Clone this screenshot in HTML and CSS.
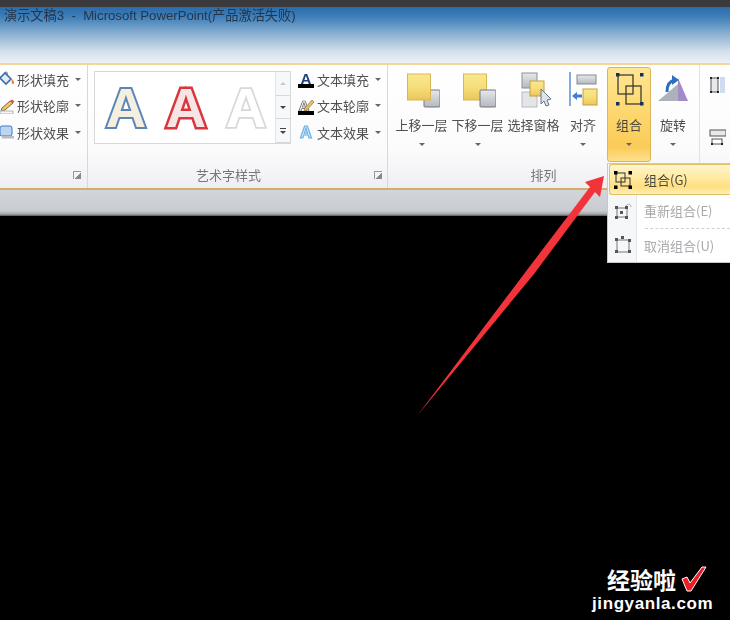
FILE: index.html
```html
<!DOCTYPE HTML>
<html>
    <head>
        <title>Microsoft PowerPoint</title>
        <meta charset="utf-8">
        <link rel="stylesheet" href="styles.css">
    </head>
    <body>
        <svg class="defs" width="0" height="0">
            <defs>
                <linearGradient id="yel" x1="0" y1="0" x2="0" y2="1">
                    <stop offset="0" stop-color="#f8e88e"/>
                    <stop offset="0.5" stop-color="#f6de7c"/>
                    <stop offset="1" stop-color="#eac65a"/>
                </linearGradient>
                <linearGradient id="gry" x1="0" y1="0" x2="0" y2="1">
                    <stop offset="0" stop-color="#e6e8ec"/>
                    <stop offset="1" stop-color="#b4b8bf"/>
                </linearGradient>
            </defs>
        </svg>
        <div class="window">
            <div class="topline"></div>
            <div class="titlebar">演示文稿3 &nbsp;-&nbsp; Microsoft PowerPoint(产品激活失败)</div>
            <div class="ribbon">

                <!-- shape styles -->
                <div class="group group-shape">
                    <div class="group-body cmd-list">
                        <div class="cmd">
                            <svg class="cmd-icon" width="15" height="16" viewBox="0 0 15 16"><path d="M0 7l5-5 6 6-5 5z" fill="#e4ebf4" stroke="#3c6fa8" stroke-width="1.600"/><path d="M5 2c1-2 3-1 2 2" fill="none" stroke="#3c6fa8"/><path d="M12 8c2 2 3 4 1.500 5s-2.500-2-1.500-5z" fill="#e8883a"/></svg>
                            <span>形状填充</span><i class="caret"></i>
                        </div>
                        <div class="cmd">
                            <svg class="cmd-icon" width="15" height="16" viewBox="0 0 15 16"><path d="M2 10L10 3l3 2-8 7-4 1z" fill="#f2c860" stroke="#7a6a40"/><path d="M10 3l2-1.500 2.500 2-1.500 1.500z" fill="#d8504a"/><rect x="0" y="13" width="13" height="3" fill="#f4f4f4" stroke="#b5b5b5"/></svg>
                            <span>形状轮廓</span><i class="caret"></i>
                        </div>
                        <div class="cmd">
                            <svg class="cmd-icon" width="15" height="16" viewBox="0 0 15 16"><rect x="0" y="2" width="12" height="10" rx="2" fill="#bcd6f2" stroke="#3f7bc0"/><rect x="2" y="12" width="12" height="2.500" fill="#b8bcc4"/></svg>
                            <span>形状效果</span><i class="caret"></i>
                        </div>
                    </div>
                    <div class="group-foot">
                        <span class="foot-label"></span>
                        <i class="launcher launcher-shape"></i>
                    </div>
                </div>

                <!-- word art -->
                <div class="group group-art">
                    <div class="group-body art-body">
                        <div class="gallery">
                            <div class="swatches">
                                <span class="art art-blue">A</span>
                                <span class="art art-red">A</span>
                                <span class="art art-pale">A</span>
                            </div>
                            <div class="gallery-scroll">
                                <div class="scroll-btn scroll-up"><i class="caret caret-up"></i></div>
                                <div class="scroll-btn scroll-mid"><i class="caret caret-dark"></i></div>
                                <div class="scroll-btn scroll-more"><i class="bar"></i><i class="caret caret-dark"></i></div>
                            </div>
                        </div>
                        <div class="cmd-list">
                            <div class="cmd">
                                <svg class="art-icon" width="18" height="18" viewBox="0 0 18 18"><text x="9" y="14" class="icon-letter" fill="#22407e">A</text><rect x="1" y="14" width="16" height="4" fill="#000"/></svg>
                                <span>文本填充</span><i class="caret"></i>
                            </div>
                            <div class="cmd">
                                <svg class="art-icon" width="18" height="18" viewBox="0 0 18 18"><text x="7" y="14" class="icon-letter" fill="#f4f4f4" stroke="#555" stroke-width=".7">A</text><path d="M8 11l7-8 2 2-7 8-3 1z" fill="#e8c05a" stroke="#806a30" stroke-width=".6"/><rect x="1" y="14" width="16" height="4" fill="#000"/></svg>
                                <span>文本轮廓</span><i class="caret"></i>
                            </div>
                            <div class="cmd">
                                <svg class="art-icon" width="18" height="18" viewBox="0 0 18 18"><text x="9" y="15" class="icon-letter icon-letter-big" fill="#d8ecfa" stroke="#6ab4e8" stroke-width="1.200">A</text></svg>
                                <span>文本效果</span><i class="caret"></i>
                            </div>
                        </div>
                    </div>
                    <div class="group-foot">
                        <span class="foot-label foot-label-art">艺术字样式</span>
                        <i class="launcher launcher-art"></i>
                    </div>
                </div>

                <!-- arrange -->
                <div class="group group-arrange">
                    <div class="group-body big-row">
                        <div class="big big-wide">
                            <svg width="36" height="36" viewBox="0 0 36 36"><rect x="20" y="18" width="16" height="17" rx="1" fill="url(#gry)" stroke="#77797d"/><rect x="3.500" y="2" width="23" height="26" fill="url(#yel)" stroke="#d9b654"/></svg>
                            <span>上移一层</span><i class="caret"></i>
                        </div>
                        <div class="big big-wide">
                            <svg width="36" height="36" viewBox="0 0 36 36"><rect x="3.500" y="2" width="23" height="26" fill="url(#yel)" stroke="#d9b654"/><rect x="20" y="18" width="16" height="17" rx="1" fill="url(#gry)" stroke="#77797d"/></svg>
                            <span>下移一层</span><i class="caret"></i>
                        </div>
                        <div class="big big-wide">
                            <svg width="36" height="36" viewBox="0 0 36 36"><rect x="6" y="1" width="15" height="15" fill="url(#gry)" stroke="#8c8f94"/><rect x="6" y="20" width="15" height="15" fill="#e3e5e8" stroke="#b9bbbf"/><rect x="14" y="9" width="14" height="15" fill="url(#yel)" stroke="#c79f3e"/><path d="M25 17l0 15 3-3 2 5 3-1-2-5 4-1z" fill="#dfe3ea" stroke="#6a7488"/></svg>
                            <span>选择窗格</span><i class="caret caret-hidden"></i>
                        </div>
                        <div class="big big-align">
                            <svg width="32" height="36" viewBox="0 0 32 36"><path d="M3 0v34" stroke="#5d8fd0" stroke-width="1.500"/><rect x="10" y="3" width="19" height="9" fill="url(#gry)" stroke="#86898e"/><rect x="16" y="17" width="14" height="16" fill="url(#yel)" stroke="#c79f3e"/><path d="M5 24l5-4v2.500h5v3h-5v2.500z" fill="#3f7fd0"/></svg>
                            <span>对齐</span><i class="caret"></i>
                        </div>
                        <div class="big big-active">
                            <svg width="32" height="36" viewBox="0 0 32 36"><g fill="none" stroke="#3d3d36" stroke-width="1.300"><rect x="5" y="3" width="15" height="19"/><rect x="13" y="14" width="15" height="18"/></g><g fill="#17305e"><rect x="3" y="1" width="3.500" height="3.500"/><rect x="27" y="1" width="3.500" height="3.500"/><rect x="3" y="30" width="3.500" height="3.500"/><rect x="27" y="30" width="3.500" height="3.500"/></g></svg>
                            <span>组合</span><i class="caret"></i>
                        </div>
                        <div class="big big-rotate">
                            <svg width="34" height="36" viewBox="0 0 34 36"><path d="M2 29L22 12v17z" fill="#adb2ba"/><path d="M22 6l10 23H22z" fill="#a08cc8"/><path d="M11 20c0-6 2-11 8-12" fill="none" stroke="#2f6fc0" stroke-width="3"/><path d="M16 3l7 5-7 5z" fill="#2f6fc0"/></svg>
                            <span>旋转</span><i class="caret"></i>
                        </div>
                    </div>
                    <div class="group-foot">
                        <span class="foot-label">排列</span>
                    </div>
                </div>

                <div class="group group-size">
                    <svg class="size-icon" width="18" height="18" viewBox="0 0 18 18"><rect x="3" y="2" width="7" height="14" fill="#e6e8ec" stroke="#555"/><rect x="12" y="1" width="5" height="16" fill="#cfdcf0"/><g fill="#222"><rect x="2" y="1" width="2" height="2"/><rect x="9" y="1" width="2" height="2"/><rect x="2" y="15" width="2" height="2"/><rect x="9" y="15" width="2" height="2"/></g></svg>
                    <svg class="size-icon" width="18" height="18" viewBox="0 0 18 18"><rect x="2" y="2" width="16" height="6" fill="#e6e8ec" stroke="#555"/><rect x="4" y="11" width="10" height="5" fill="#fff" stroke="#555"/><g fill="#222"><rect x="3" y="15" width="2" height="2"/><rect x="13" y="15" width="2" height="2"/></g></svg>
                </div>
            </div>
            <div class="status-band"></div>
            <div class="stage"></div>
        </div>

        <!-- dropdown of the group button -->
        <div class="menu">
            <div class="menu-item menu-item-on">
                <svg width="20" height="20" viewBox="0 0 20 20"><g fill="none" stroke="#333"><rect x="3" y="3" width="9" height="9"/><rect x="8" y="8" width="9" height="8"/></g><g fill="#000"><rect x="1" y="1" width="3.500" height="3.500"/><rect x="15.500" y="1" width="3.500" height="3.500"/><rect x="1" y="15.500" width="3.500" height="3.500"/><rect x="15.500" y="15.500" width="3.500" height="3.500"/></g></svg>
                <span>组合(G)</span>
            </div>
            <div class="menu-item menu-item-off">
                <svg width="20" height="20" viewBox="0 0 20 20"><g fill="none" stroke="#777"><rect x="4" y="7" width="10" height="9"/><path d="M13 5c2-3 5-2 5 1" stroke="#aaa"/></g><g fill="#555"><rect x="2" y="5" width="3" height="3"/><rect x="12" y="5" width="3" height="3"/><rect x="2" y="15" width="3" height="3"/><rect x="12" y="15" width="3" height="3"/><rect x="7" y="10" width="3" height="3"/></g></svg>
                <span>重新组合(E)</span>
            </div>
            <div class="menu-dash"></div>
            <div class="menu-item menu-item-off menu-item-last">
                <svg width="20" height="20" viewBox="0 0 20 20"><rect x="4" y="5" width="12" height="12" fill="none" stroke="#777"/><g fill="#555"><rect x="2" y="3" width="3" height="3"/><rect x="8" y="1" width="3" height="3"/><rect x="15" y="4" width="3" height="3"/><rect x="2" y="15" width="3" height="3"/><rect x="15" y="15" width="3" height="3"/></g></svg>
                <span>取消组合(U)</span>
            </div>
        </div>

        <svg class="pointer" width="200" height="260" viewBox="410 165 200 260">
            <path d="M417 416L527 270 590 187 585 182 604 176 600 197 595 192 534 274z" fill="#f2333a"/>
        </svg>

        <div class="mark">
            <div class="mark-top">
                <span>经验啦</span>
                <svg width="26" height="26" viewBox="0 0 26 26"><path d="M1 13l5-2 3 6L21 1h4L10 25H6z" fill="#ee1c25" stroke="#fff" stroke-width="1"/></svg>
            </div>
            <div class="mark-url">jingyanla.com</div>
        </div>
    </body>
</html>
```

FILE: styles.css
```css
*
{
    box-sizing: border-box;
}
body
{
    margin: 0px;
    width: 730px;
    height: 620px;
    overflow: hidden;
    position: relative;
    background-color: #000;
    font-family: "Noto Sans CJK SC", "Liberation Sans", sans-serif;
    font-size: 13px;
    color: #4f4f4f;
}
.defs
{
    display: block;
    height: 0;
}
.window
{
    display: flex;
    flex-direction: column;
    height: 620px;
}
.topline
{
    height: 7px;
    background-color: #3a3a3c;
}
.titlebar
{
    height: 56px;
    padding: 0 0 0 4px;
    font-family: "Liberation Sans", "Noto Sans CJK SC", sans-serif;
    font-size: 13.200px;
    line-height: 17px;
    color: #26364a;
    white-space: nowrap;
    background: linear-gradient(180deg, #2a6cab 0%, #3f7fb9 18%, #8fb3d3 50%, #d4e1ec 80%, #ecf1f5 100%);
    filter: blur(.5px);
}
.ribbon
{
    display: flex;
    height: 127px;
    border-top: 2px solid #f6d596;
    border-bottom: 2px solid #d3ad6c;
    background: linear-gradient(180deg, #ffffff 0%, #fbfbfc 70%, #eeeff1 100%);
    filter: blur(.6px);
}
.group
{
    display: flex;
    flex-direction: column;
    border-right: 1px solid #f6d596;
}
.group-shape
{
    width: 88px;
}
.group-art
{
    width: 300px;
}
.group-arrange
{
    width: 312px;
    border-right-color: #e8e0d0;
}
.group-size
{
    flex: 1;
    border-right: 0;
    padding: 11px 0 0 8px;
    gap: 34px;
}
.size-icon
{
    display: block;
}
.group-body
{
    flex: 1;
}
.group-foot
{
    display: flex;
    align-items: center;
    height: 26px;
    padding-bottom: 1px;
}
.foot-label
{
    flex: 1;
    text-align: center;
    color: #777;
}
.foot-label-art
{
    padding-right: 5px;
}
.launcher
{
    width: 8px;
    height: 8px;
    border-left: 1px solid #999;
    border-top: 1px solid #999;
    background: linear-gradient(135deg, transparent 55%, #888 55%);
}
.launcher-shape
{
    margin-right: 6px;
}
.launcher-art
{
    margin-right: 5px;
}

/* command rows */
.cmd-list
{
    padding-top: 1px;
}
.cmd
{
    display: flex;
    align-items: center;
    height: 26.500px;
    white-space: nowrap;
}
.cmd-icon
{
    margin-right: 2px;
    flex: none;
}
.art-icon
{
    margin-right: 2px;
    flex: none;
}
.cmd .caret
{
    margin-left: 6px;
}
.caret
{
    display: inline-block;
    width: 0;
    height: 0;
    border-left: 3px solid transparent;
    border-right: 3px solid transparent;
    border-top: 3px solid #666;
}
.caret-hidden
{
    visibility: hidden;
}
.caret-up
{
    border-top: 0;
    border-bottom: 3px solid #c8c8c8;
}
.caret-dark
{
    border-top-color: #444;
}
.icon-letter
{
    font-family: "Liberation Sans", sans-serif;
    font-weight: bold;
    font-size: 15px;
    text-anchor: middle;
}
.icon-letter-big
{
    font-size: 16.500px;
}

/* word art gallery */
.art-body
{
    display: flex;
    padding-left: 6px;
}
.gallery
{
    display: flex;
    width: 197px;
    height: 73px;
    margin: 6px 6px 0 0;
    border: 1px solid #d6d8dc;
    background-color: #fff;
}
.swatches
{
    flex: 1;
    display: flex;
    gap: 18px;
    align-items: center;
    padding-left: 10px;
}
.art
{
    font-family: "Liberation Sans", sans-serif;
    font-weight: bold;
    font-size: 56px;
    line-height: 60px;
    paint-order: stroke;
    width: 42px;
    text-align: center;
}
.art-blue
{
    color: #f5efe0;
    -webkit-text-stroke: 4px #5b86b8;
}
.art-red
{
    color: #f7e4e4;
    -webkit-text-stroke: 5px #d8363a;
}
.art-pale
{
    color: #fff;
    -webkit-text-stroke: 3.500px #d8d8d8;
}
.gallery-scroll
{
    width: 15px;
    display: flex;
    flex-direction: column;
    border-left: 1px solid #e4e6e9;
}
.scroll-btn
{
    flex: 1;
    display: flex;
    flex-direction: column;
    align-items: center;
    justify-content: center;
    gap: 2px;
    background-color: #f7f8f9;
    border-bottom: 1px solid #d6d8dc;
}
.bar
{
    width: 6px;
    height: 1px;
    background-color: #444;
}

/* big buttons */
.big-row
{
    display: flex;
    gap: 5px;
    padding: 2px 0 0 8px;
}
.big
{
    display: flex;
    flex-direction: column;
    align-items: center;
    height: 95px;
    padding-top: 5px;
    white-space: nowrap;
}
.big span
{
    margin-top: 7px;
    line-height: 20px;
}
.big .caret
{
    margin-top: 8px;
}
.big-wide
{
    width: 51px;
}
.big-align
{
    width: 38px;
}
.big-active
{
    width: 44px;
    border: 1px solid #dcb45e;
    border-radius: 3px;
    padding-top: 4px;
    background: linear-gradient(180deg, #ffe694 0%, #fdd870 45%, #fbcb58 85%, #fde08e 100%);
    color: #4a4a40;
}
.big-rotate
{
    width: 34px;
}

/* lower band and slide area */
.status-band
{
    height: 26px;
    background: linear-gradient(180deg, #d2d5d9 0%, #c9ccd1 80%, #a9abaf 92%, #55565a 100%);
}
.stage
{
    flex: 1;
    background-color: #000;
}

/* dropdown */
.menu
{
    position: absolute;
    left: 607px;
    top: 163px;
    width: 123px;
    height: 100px;
    padding: 0 0 0 1px;
    border: 1px solid #c6c8cc;
    border-right: 0;
    background: linear-gradient(90deg, #f6f7f8 0, #f6f7f8 28px, #e3e4e6 28px, #e3e4e6 29px, #ffffff 29px);
    filter: blur(.6px);
}
.menu-item
{
    display: flex;
    align-items: center;
    gap: 11px;
    height: 31px;
    padding-left: 4px;
    white-space: nowrap;
}
.menu-item-last
{
    height: 30px;
}
.menu-item-on
{
    border: 1px solid #e3c064;
    border-right: 0;
    border-radius: 3px 0 0 3px;
    padding-left: 3px;
    background: linear-gradient(180deg, #fff5cc 0%, #ffe99c 50%, #ffdf7e 75%, #fff0b8 100%);
    color: #4a4a40;
}
.menu-item-off
{
    color: #a8aaad;
}
.menu-dash
{
    height: 3px;
    margin: 0 0 1px 36px;
    border-bottom: 1px dashed #cfd0d2;
}

.pointer
{
    position: absolute;
    left: 410px;
    top: 165px;
}

/* watermark */
.mark
{
    position: absolute;
    left: 592px;
    top: 565px;
    width: 124px;
    color: #fff;
    font-weight: bold;
}
.mark-top
{
    display: flex;
    align-items: center;
    gap: 5px;
    height: 28px;
    padding-left: 15px;
    font-size: 23px;
    line-height: 28px;
}
.mark-url
{
    margin-top: 2px;
    font-family: "Liberation Sans", sans-serif;
    font-size: 17px;
    line-height: 18px;
    letter-spacing: .600px;
    white-space: nowrap;
}
```
